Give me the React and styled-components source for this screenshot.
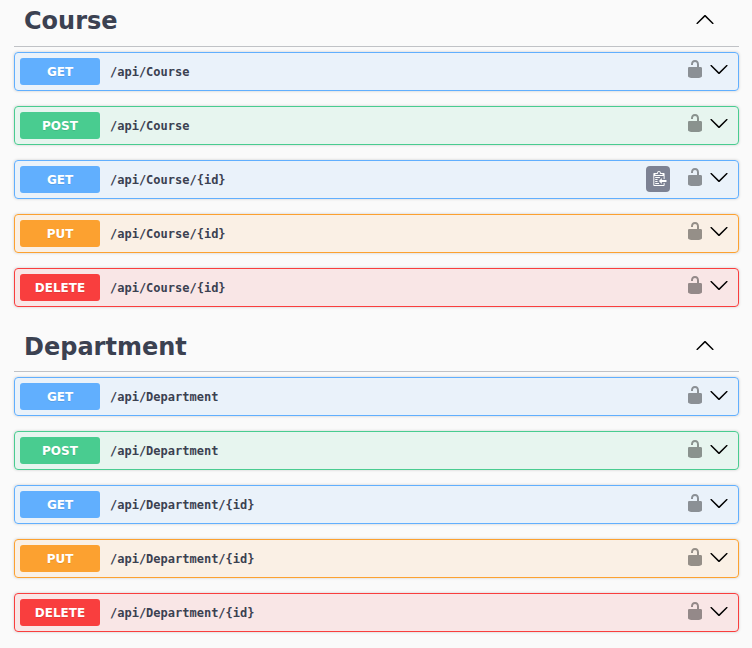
import React from "react";
import styled, { createGlobalStyle } from "styled-components";

const METHOD_COLORS = {
  GET: { main: "#61affe", tint: "rgba(97, 175, 254, 0.1)" },
  POST: { main: "#49cc90", tint: "rgba(73, 204, 144, 0.1)" },
  PUT: { main: "#fca130", tint: "rgba(252, 161, 48, 0.1)" },
  DELETE: { main: "#f93e3e", tint: "rgba(249, 62, 62, 0.1)" },
};

const SECTIONS = [
  {
    name: "Course",
    operations: [
      { method: "GET", path: "/api/Course" },
      { method: "POST", path: "/api/Course" },
      { method: "GET", path: "/api/Course/{id}", copy: true },
      { method: "PUT", path: "/api/Course/{id}" },
      { method: "DELETE", path: "/api/Course/{id}" },
    ],
  },
  {
    name: "Department",
    operations: [
      { method: "GET", path: "/api/Department" },
      { method: "POST", path: "/api/Department" },
      { method: "GET", path: "/api/Department/{id}" },
      { method: "PUT", path: "/api/Department/{id}" },
      { method: "DELETE", path: "/api/Department/{id}" },
    ],
  },
];

const GlobalStyle = createGlobalStyle`
  *, *::before, *::after { box-sizing: border-box; }
  body {
    margin: 0;
    background: #fafafa;
    color: #3b4151;
    font-family: "DejaVu Sans", sans-serif;
    overflow: hidden;
  }
`;

const Page = styled.main`
  height: 648px;
  padding: 0 13px 0 14px;
  overflow: hidden;
`;

const Section = styled.section`
  margin-bottom: 12px;
`;

const SectionHeader = styled.header`
  display: flex;
  align-items: center;
  justify-content: space-between;
  height: ${(p) => (p.$first ? "47px" : "53px")};
  margin-bottom: 5px;
  padding: ${(p) => (p.$first ? "0 24px 8px 10px" : "0 24px 0 10px")};
  border-bottom: 1px solid rgba(59, 65, 81, 0.3);
`;

const SectionTitle = styled.h3`
  margin: 0;
  padding-top: 4px;
  font-size: 24px;
  line-height: 28px;
  font-weight: 700;
`;

const Operations = styled.div`
  display: flex;
  flex-direction: column;
  gap: 15px;
`;

const Operation = styled.div`
  display: flex;
  align-items: center;
  height: 39px;
  padding: 5px 9px 5px 5px;
  border: 1px solid ${(p) => METHOD_COLORS[p.$method].main};
  border-radius: 4px;
  background: ${(p) => METHOD_COLORS[p.$method].tint};
  box-shadow: 0 0 3px rgba(0, 0, 0, 0.19);
`;

const Method = styled.span`
  width: 80px;
  height: 27px;
  padding-top: 1px;
  border-radius: 3px;
  background: ${(p) => METHOD_COLORS[p.$method].main};
  color: #fff;
  font-size: 12px;
  font-weight: 700;
  line-height: 27px;
  text-align: center;
  text-shadow: 0 1px 0 rgba(0, 0, 0, 0.1);
`;

const Path = styled.span`
  flex: 1;
  padding: 2px 0 0 10px;
  font-family: "DejaVu Sans Mono", monospace;
  font-size: 12px;
  font-weight: 700;
  line-height: 15px;
`;

const IconButton = styled.button`
  display: flex;
  padding: 0;
  border: 0;
  background: none;
  color: #000;
`;

const CopyButton = styled(IconButton)`
  align-items: center;
  justify-content: center;
  width: 24px;
  height: 26px;
  margin: 0 15px 1px 0;
  border-radius: 4px;
  background: #7d8293;
  color: #fff;
`;

const RowActions = styled.div`
  display: flex;
  gap: 4px;
  padding-bottom: ${(p) => (p.$raised ? "5px" : "3px")};
`;

const LockButton = styled(IconButton)`
  opacity: 0.4;
`;

const ClipboardIcon = styled.svg`
  width: 15px;
  height: 16px;
  overflow: visible;
  fill: currentColor;
`;

function Chevron({ up }) {
  return (
    <svg width="20" height="20" viewBox="0 0 20 20" fill="currentColor">
      {up ? (
        <path d="M17.418 14.908c.272.268.709.268.979 0s.271-.701 0-.969l-7.908-7.83c-.27-.268-.707-.268-.979 0l-7.908 7.83c-.27.268-.27.701 0 .969.271.268.709.268.979 0L10 7.767l7.418 7.141z" />
      ) : (
        <path d="M17.418 6.109c.272-.268.709-.268.979 0s.271.701 0 .969l-7.908 7.83c-.27.268-.707.268-.979 0l-7.908-7.83c-.27-.268-.27-.701 0-.969.271-.268.709-.268.979 0L10 13.25l7.418-7.141z" />
      )}
    </svg>
  );
}

function OpenLock() {
  return (
    <svg width="20" height="20" viewBox="0 0 20 20" fill="currentColor">
      <path d="M15.8 8H14V5.6C14 2.703 12.665 1 10 1 7.334 1 6 2.703 6 5.6V6h2v-.801C8 3.754 8.797 3 10 3c1.203 0 2 .754 2 2.199V8H4c-.553 0-1 .646-1 1.199V17c0 .549.428 1.139.951 1.307l1.197.387C5.672 18.861 6.55 19 7.1 19h5.8c.549 0 1.428-.139 1.951-.307l1.196-.387c.524-.167.953-.757.953-1.306V9.199C17 8.646 16.352 8 15.8 8z" />
    </svg>
  );
}

function Clipboard() {
  return (
    <ClipboardIcon viewBox="-0.5 0 16 16" preserveAspectRatio="none">
      <path
        fillRule="evenodd"
        d="M4 12h4v1H4v-1zm5-6H4v1h5V6zm2 3V7l-3 3 3 3v-2h5V9h-5zM6.5 8H4v1h2.5V8zM4 11h2.5v-1H4v1zm9 1h1v2c-.02.28-.11.52-.3.7-.19.18-.42.28-.7.3H3c-.55 0-1-.45-1-1V3c0-.55.45-1 1-1h3c0-1.11.89-2 2-2 1.11 0 2 .89 2 2h3c.55 0 1 .45 1 1v5h-1V5H3v9h10v-2zM4 4h8c0-.55-.45-1-1-1h-1c-.55 0-1-.45-1-1s-.45-1-1-1-1 .45-1 1-.45 1-1 1H5c-.55 0-1 .45-1 1z"
      />
    </ClipboardIcon>
  );
}

function OperationRow({ method, path, copy, raised }) {
  return (
    <Operation $method={method}>
      <Method $method={method}>{method}</Method>
      <Path>{path}</Path>
      {copy && (
        <CopyButton aria-label="Copy to clipboard">
          <Clipboard />
        </CopyButton>
      )}
      <RowActions $raised={raised}>
        <LockButton aria-label="Authorize">
          <OpenLock />
        </LockButton>
        <IconButton aria-label="Expand operation">
          <Chevron />
        </IconButton>
      </RowActions>
    </Operation>
  );
}

export default function App() {
  return (
    <>
      <GlobalStyle />
      <Page>
        {SECTIONS.map((section, i) => (
          <Section key={section.name}>
            <SectionHeader $first={i === 0}>
              <SectionTitle>{section.name}</SectionTitle>
              <IconButton aria-label="Collapse section">
                <Chevron up />
              </IconButton>
            </SectionHeader>
            <Operations>
              {section.operations.map((op) => (
                <OperationRow key={op.method + op.path} raised={i === 0} {...op} />
              ))}
            </Operations>
          </Section>
        ))}
      </Page>
    </>
  );
}
